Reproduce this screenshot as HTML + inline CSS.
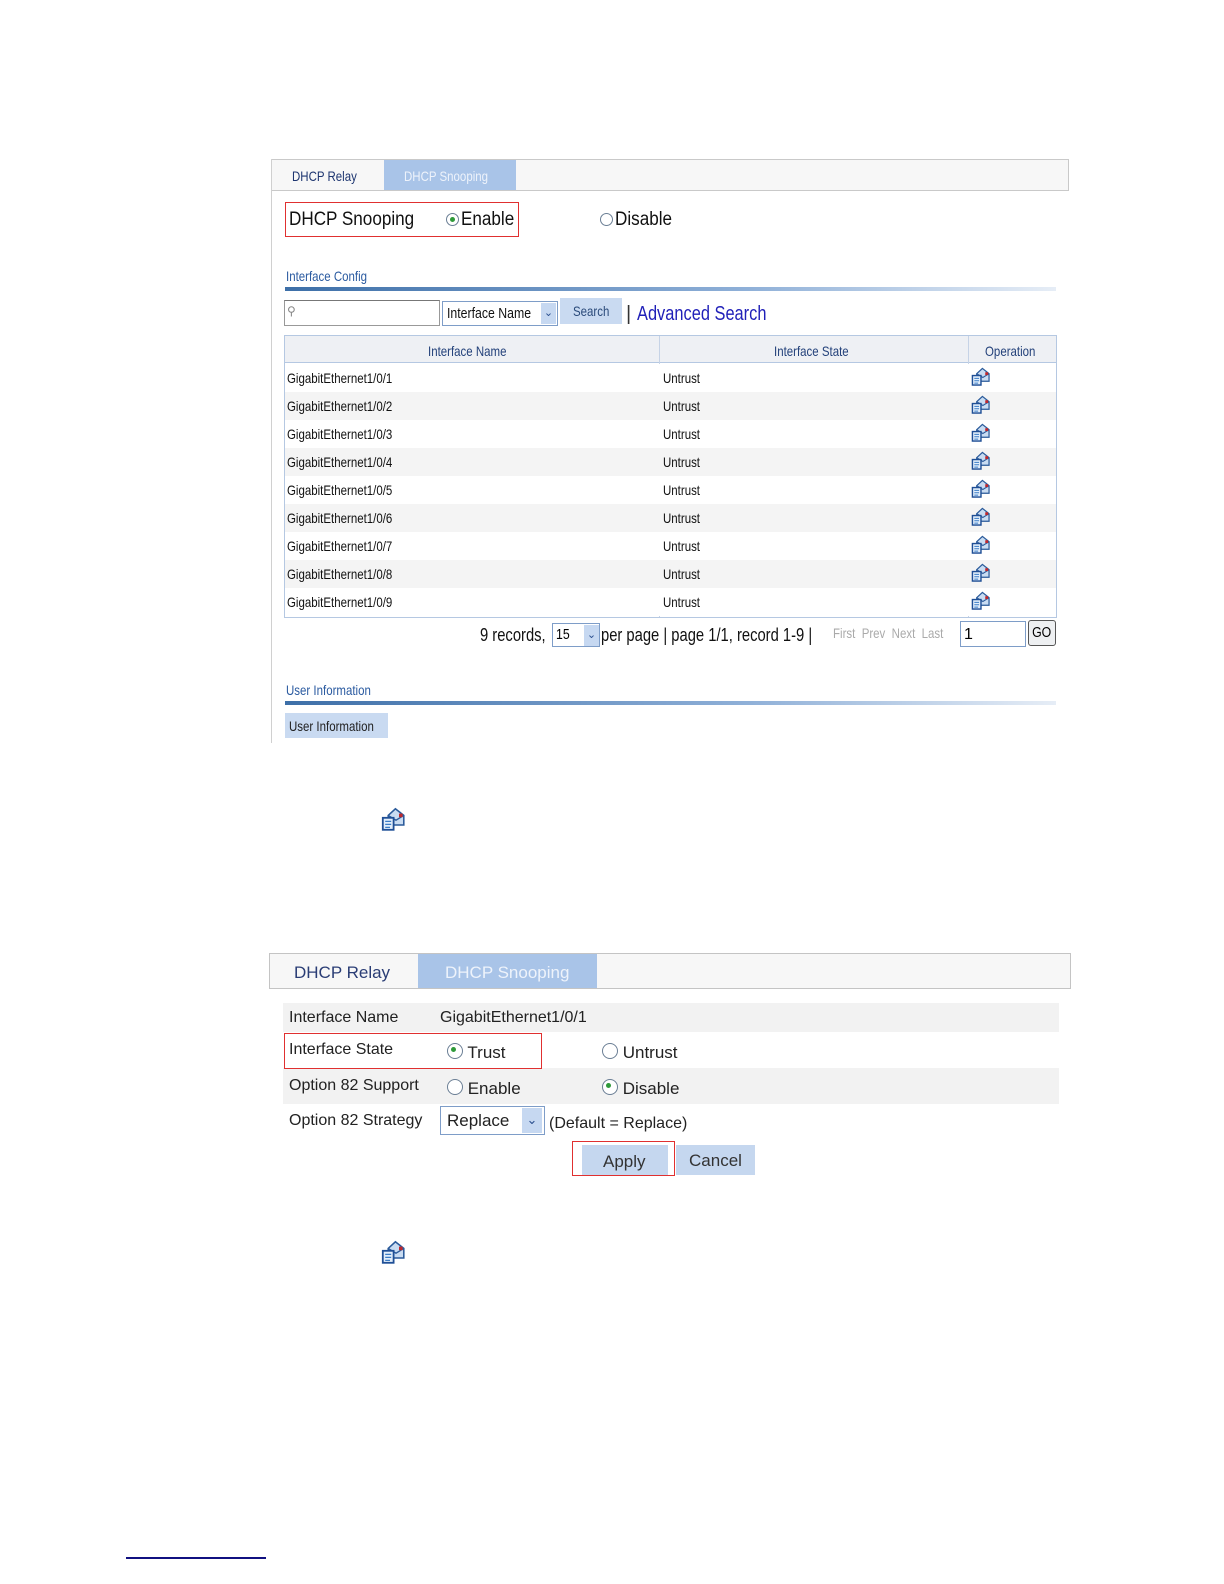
<!DOCTYPE html>
<html><head><meta charset="utf-8"><style>
*{margin:0;padding:0;box-sizing:border-box}
html{width:1224px;height:1584px;overflow:hidden}
body{width:1224px;height:1584px;background:#fff;position:relative;font-family:"Liberation Sans",Arial,sans-serif;overflow:hidden}
.a{position:absolute;white-space:nowrap}
.n{display:inline-block;transform:scaleX(.82);transform-origin:left center}
.radio{display:inline-block;width:13px;height:13px;border:1px solid #6b7f95;border-radius:50%;background:#fff;vertical-align:-1px;position:relative}
.radio.on::after{content:"";position:absolute;left:3px;top:3px;width:5px;height:5px;border-radius:50%;background:#2f9a3a}
.row{position:absolute;left:285px;width:771px;height:28px;font-size:14px;color:#111}
.row span{position:absolute;top:6px}
</style></head><body>
<svg width="0" height="0" style="position:absolute"><defs>
<symbol id="ic" viewBox="0 0 20 20">
<path d="M6 7 L12 1.5 L19 7 L19 15 L6 15 Z" fill="#c9dcf2" stroke="#2a5a9a" stroke-width="1.3"/>
<path d="M6 7 L12.5 11 L19 7" fill="none" stroke="#2a5a9a" stroke-width="1.1"/>
<rect x="15" y="5.5" width="3" height="3" fill="#c0282d"/>
<rect x="1.5" y="9" width="9" height="10" fill="#e2eefb" stroke="#1f4f96" stroke-width="1.5"/>
<path d="M3.5 12h5M3.5 14.5h5M3.5 17h4" stroke="#3a7cc6" stroke-width="1"/>
</symbol></defs></svg>

<!-- screenshot 1 -->
<div class="a" style="left:271px;top:159px;width:798px;height:32px;border:1px solid #c9c9c9;background:#f7f7f7"></div>
<div class="a" style="left:271px;top:159px;width:1px;height:584px;background:#d0d0d0"></div>
<div class="a" style="left:384px;top:160px;width:132px;height:30px;background:#a9c4e8"></div>
<div class="a" style="left:292px;top:168px;font-size:14px;color:#1d3570"><span class="n">DHCP Relay</span></div>
<div class="a" style="left:404px;top:168px;font-size:14px;color:#eef3fb"><span class="n">DHCP Snooping</span></div>

<div class="a" style="left:285px;top:202px;width:234px;height:35px;border:1px solid #e03030"></div>
<div class="a" style="left:289px;top:209px;font-size:19px;color:#111"><span class="n" style="transform:scaleX(.9)">DHCP Snooping</span></div>
<div class="a" style="left:446px;top:209px;font-size:19px;color:#111"><span class="radio on"></span><span class="n" style="transform:scaleX(.9);margin-left:2px">Enable</span></div>
<div class="a" style="left:600px;top:209px;font-size:19px;color:#111"><span class="radio"></span><span class="n" style="transform:scaleX(.9);margin-left:2px">Disable</span></div>

<div class="a" style="left:286px;top:268px;font-size:14px;color:#2a5aa0"><span class="n">Interface Config</span></div>
<div class="a" style="left:285px;top:287px;width:771px;height:4px;background:linear-gradient(90deg,#3d6fa8,#8fb0d8 60%,#e6edf6)"></div>

<div class="a" style="left:284px;top:300px;width:156px;height:26px;border:1px solid #999;border-top-color:#777;background:#fff"></div>
<div class="a" style="left:287px;top:304px;font-size:12px;color:#888">&#9906;</div>
<div class="a" style="left:442px;top:301px;width:116px;height:25px;border:1px solid #7e9dc8;background:#fff;font-size:15px;color:#111;padding:3px 4px"><span class="n">Interface Name</span></div>
<div class="a" style="left:541px;top:303px;width:15px;height:21px;background:#c6d8f1;color:#2b4f8f;font-size:11px;text-align:center;line-height:21px">&#8964;</div>
<div class="a" style="left:560px;top:298px;width:62px;height:26px;background:#c9daf1;font-size:14px;color:#2a4a7a;text-align:center;line-height:26px"><span class="n" style="transform-origin:center">Search</span></div>
<div class="a" style="left:626px;top:303px;font-size:20px;color:#1f1fb8"><span style="color:#333">|</span> <span class="n">Advanced Search</span></div>

<div class="a" style="left:284px;top:335px;width:773px;height:283px;border:1px solid #b5c8e2"></div>
<div class="a" style="left:285px;top:336px;width:771px;height:27px;background:#eef0f4;border-bottom:1px solid #b5c8e2"></div>
<div class="a" style="left:659px;top:336px;width:1px;height:281px;background:#c6d3e6"></div>
<div class="a" style="left:968px;top:336px;width:1px;height:281px;background:#c6d3e6"></div>
<div class="a" style="left:428px;top:343px;font-size:14px;color:#23417a"><span class="n">Interface Name</span></div>
<div class="a" style="left:774px;top:343px;font-size:14px;color:#23417a"><span class="n">Interface State</span></div>
<div class="a" style="left:985px;top:343px;font-size:14px;color:#23417a"><span class="n">Operation</span></div>

<div class="row" style="top:364px;background:#fff"><span style="left:2px" class="n">GigabitEthernet1/0/1</span><span style="left:378px" class="n">Untrust</span><svg style="position:absolute;left:686px;top:3px" width="19" height="19"><use href="#ic"/></svg></div>
<div class="row" style="top:392px;background:#f4f4f4"><span style="left:2px" class="n">GigabitEthernet1/0/2</span><span style="left:378px" class="n">Untrust</span><svg style="position:absolute;left:686px;top:3px" width="19" height="19"><use href="#ic"/></svg></div>
<div class="row" style="top:420px;background:#fff"><span style="left:2px" class="n">GigabitEthernet1/0/3</span><span style="left:378px" class="n">Untrust</span><svg style="position:absolute;left:686px;top:3px" width="19" height="19"><use href="#ic"/></svg></div>
<div class="row" style="top:448px;background:#f4f4f4"><span style="left:2px" class="n">GigabitEthernet1/0/4</span><span style="left:378px" class="n">Untrust</span><svg style="position:absolute;left:686px;top:3px" width="19" height="19"><use href="#ic"/></svg></div>
<div class="row" style="top:476px;background:#fff"><span style="left:2px" class="n">GigabitEthernet1/0/5</span><span style="left:378px" class="n">Untrust</span><svg style="position:absolute;left:686px;top:3px" width="19" height="19"><use href="#ic"/></svg></div>
<div class="row" style="top:504px;background:#f4f4f4"><span style="left:2px" class="n">GigabitEthernet1/0/6</span><span style="left:378px" class="n">Untrust</span><svg style="position:absolute;left:686px;top:3px" width="19" height="19"><use href="#ic"/></svg></div>
<div class="row" style="top:532px;background:#fff"><span style="left:2px" class="n">GigabitEthernet1/0/7</span><span style="left:378px" class="n">Untrust</span><svg style="position:absolute;left:686px;top:3px" width="19" height="19"><use href="#ic"/></svg></div>
<div class="row" style="top:560px;background:#f4f4f4"><span style="left:2px" class="n">GigabitEthernet1/0/8</span><span style="left:378px" class="n">Untrust</span><svg style="position:absolute;left:686px;top:3px" width="19" height="19"><use href="#ic"/></svg></div>
<div class="row" style="top:588px;background:#fff"><span style="left:2px" class="n">GigabitEthernet1/0/9</span><span style="left:378px" class="n">Untrust</span><svg style="position:absolute;left:686px;top:3px" width="19" height="19"><use href="#ic"/></svg></div>

<div class="a" style="left:480px;top:625px;font-size:18px;color:#111"><span class="n">9 records,</span></div>
<div class="a" style="left:552px;top:623px;width:48px;height:24px;border:1px solid #7e9dc8;background:#fff;font-size:15px;padding:2px 3px"><span class="n">15</span></div>
<div class="a" style="left:584px;top:625px;width:15px;height:21px;background:#c6d8f1;color:#2b4f8f;font-size:11px;text-align:center;line-height:20px">&#8964;</div>
<div class="a" style="left:601px;top:625px;font-size:18px;color:#111"><span class="n">per page | page 1/1, record 1-9 |</span></div>
<div class="a" style="left:833px;top:625px;font-size:14px;color:#aaa"><span class="n">First &nbsp;Prev &nbsp;Next &nbsp;Last</span></div>
<div class="a" style="left:960px;top:621px;width:66px;height:26px;border:1px solid #7e9dc8;background:#fff;font-size:16px;padding:4px 3px">1</div>
<div class="a" style="left:1028px;top:620px;width:28px;height:26px;border:1px solid #555;border-radius:3px;background:#eef0f2;font-size:15px;text-align:center;line-height:24px"><span class="n" style="transform-origin:center">GO</span></div>

<div class="a" style="left:286px;top:682px;font-size:14px;color:#2a5aa0"><span class="n">User Information</span></div>
<div class="a" style="left:285px;top:701px;width:771px;height:4px;background:linear-gradient(90deg,#3d6fa8,#8fb0d8 60%,#e6edf6)"></div>
<div class="a" style="left:285px;top:713px;width:103px;height:25px;background:#c9daf1;font-size:14px;color:#222;padding:5px 4px"><span class="n">User Information</span></div>

<svg class="a" style="left:381px;top:807px" width="24" height="24"><use href="#ic"/></svg>

<!-- screenshot 2 -->
<div class="a" style="left:269px;top:953px;width:802px;height:36px;border:1px solid #c4c4c4;background:#f7f7f7"></div>
<div class="a" style="left:418px;top:954px;width:179px;height:34px;background:#a9c4e8"></div>
<div class="a" style="left:294px;top:963px;font-size:17px;color:#2a3d75">DHCP Relay</div>
<div class="a" style="left:445px;top:963px;font-size:17px;color:#eef3fb">DHCP Snooping</div>

<div class="a" style="left:283px;top:1003px;width:776px;height:29px;background:#f2f2f2"></div>
<div class="a" style="left:283px;top:1068px;width:776px;height:36px;background:#f2f2f2"></div>
<div class="a" style="left:289px;top:1009px;font-size:16px;color:#222">Interface Name</div>
<div class="a" style="left:440px;top:1009px;font-size:16px;color:#222">GigabitEthernet1/0/1</div>
<div class="a" style="left:284px;top:1033px;width:258px;height:36px;border:1px solid #e03030"></div>
<div class="a" style="left:289px;top:1041px;font-size:16px;color:#222">Interface State</div>
<div class="a" style="left:447px;top:1043px;font-size:17px;color:#222"><span class="radio on" style="width:16px;height:16px"></span> Trust</div>
<div class="a" style="left:602px;top:1043px;font-size:17px;color:#222"><span class="radio" style="width:16px;height:16px"></span> Untrust</div>
<div class="a" style="left:289px;top:1077px;font-size:16px;color:#222">Option 82 Support</div>
<div class="a" style="left:447px;top:1079px;font-size:17px;color:#222"><span class="radio" style="width:16px;height:16px"></span> Enable</div>
<div class="a" style="left:602px;top:1079px;font-size:17px;color:#222"><span class="radio on" style="width:16px;height:16px"></span> Disable</div>
<div class="a" style="left:289px;top:1112px;font-size:16px;color:#222">Option 82 Strategy</div>
<div class="a" style="left:440px;top:1106px;width:105px;height:29px;border:1px solid #7e9dc8;background:#fff;font-size:17px;padding:4px 6px;color:#222">Replace</div>
<div class="a" style="left:522px;top:1108px;width:20px;height:25px;background:#c6d8f1;color:#2b4f8f;font-size:13px;text-align:center;line-height:24px">&#8964;</div>
<div class="a" style="left:549px;top:1115px;font-size:16px;color:#222">(Default = Replace)</div>
<div class="a" style="left:582px;top:1145px;width:86px;height:30px;background:#c5d7ef"></div>
<div class="a" style="left:572px;top:1141px;width:103px;height:35px;border:1px solid #e03030"></div>
<div class="a" style="left:603px;top:1152px;font-size:17px;color:#333">Apply</div>
<div class="a" style="left:676px;top:1145px;width:79px;height:30px;background:#c5d7ef;font-size:17px;color:#333;text-align:center;line-height:32px">Cancel</div>

<svg class="a" style="left:381px;top:1240px" width="24" height="24"><use href="#ic"/></svg>

<div class="a" style="left:126px;top:1557px;width:140px;height:2px;background:#101080"></div>
</body></html>
